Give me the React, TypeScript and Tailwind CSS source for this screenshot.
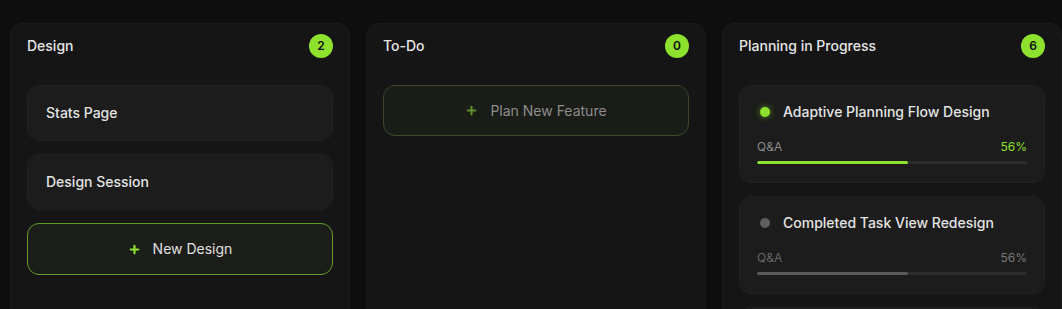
import { Plus } from 'lucide-react';

type Plan = { title: string; stage: string; pct: number; active: boolean };

const PLANS: Plan[] = [
  { title: 'Adaptive Planning Flow Design', stage: 'Q&A', pct: 56, active: true },
  { title: 'Completed Task View Redesign', stage: 'Q&A', pct: 56, active: false },
  { title: 'Onboarding Checklist', stage: 'Q&A', pct: 40, active: false },
];

function Column({ title, count, children }: { title: string; count: number; children: React.ReactNode }) {
  return (
    <section className="w-[340px] shrink-0 h-[320px] rounded-xl bg-[#151515] border border-[#1a1a1a] px-4 pt-[10px]">
      <header className="flex items-center justify-between h-6 mb-[27px]">
        <h2 className="text-sm font-medium text-[#e6e6e6]">{title}</h2>
        <span className="w-6 h-6 rounded-full bg-[#8ee22e] text-[#0d0d0d] text-xs font-semibold flex items-center justify-center">
          {count}
        </span>
      </header>
      <div className="flex flex-col gap-[13px]">{children}</div>
    </section>
  );
}

function SimpleCard({ label }: { label: string }) {
  return (
    <div className="h-14 rounded-xl bg-[#1b1c1b] border border-[#1f201f] flex items-center px-[18px] text-sm font-medium text-[#e4e4e4]">
      {label}
    </div>
  );
}

function AddButton({ label, dim }: { label: string; dim?: boolean }) {
  return (
    <button
      className={
        dim
          ? 'h-[51px] rounded-xl bg-[#1a1c18] border border-[#3a4a29] flex items-center justify-center gap-3 text-sm text-[#8c8c8c]'
          : 'h-[52px] rounded-xl bg-[#1b1d19] border border-[#629a2a] flex items-center justify-center gap-3 text-sm text-[#e0e0e0]'
      }
    >
      <Plus size={13} strokeWidth={4} className={dim ? 'text-[#5f8f2a]' : 'text-[#8ee22e]'} />
      {label}
    </button>
  );
}

function PlanCard({ plan }: { plan: Plan }) {
  return (
    <div className="rounded-xl bg-[#1b1c1b] border border-[#1f201f] px-[17px] pt-4 pb-[18px]">
      <div className="flex items-center gap-[13px] h-5 ml-[3px]">
        <span
          className={
            plan.active
              ? 'w-2.5 h-2.5 rounded-full bg-[#8ee22e] shadow-[0_0_6px_#8ee22e99]'
              : 'w-2.5 h-2.5 rounded-full bg-[#5e5e5e]'
          }
        />
        <span className="text-sm font-medium text-[#e4e4e4]">{plan.title}</span>
      </div>
      <div className="flex justify-between text-xs mt-[17px] leading-4">
        <span className={plan.active ? 'text-[#8a8a8a]' : 'text-[#666666]'}>{plan.stage}</span>
        <span className={plan.active ? 'text-[#8ee22e]' : 'text-[#7a7a7a]'}>{plan.pct}%</span>
      </div>
      <div className="mt-[6px] h-[3px] rounded-full bg-[#2a2b2a] overflow-hidden">
        <div
          className={plan.active ? 'h-full rounded-full bg-[#8ee22e]' : 'h-full rounded-full bg-[#5a5a5a]'}
          style={{ width: `${plan.pct}%` }}
        />
      </div>
    </div>
  );
}

export default function App() {
  return (
    <div
      className="h-[309px] w-[1062px] overflow-hidden bg-[#0e0e0e] pl-[10px] pt-[23px]"
      style={{ fontFamily: 'Inter, "Noto Sans", sans-serif' }}
    >
      <div className="flex gap-4">
        <Column title="Design" count={2}>
          <SimpleCard label="Stats Page" />
          <SimpleCard label="Design Session" />
          <AddButton label="New Design" />
        </Column>
        <Column title="To-Do" count={0}>
          <AddButton label="Plan New Feature" dim />
        </Column>
        <Column title="Planning in Progress" count={6}>
          {PLANS.map((p) => (
            <PlanCard key={p.title} plan={p} />
          ))}
        </Column>
      </div>
    </div>
  );
}
